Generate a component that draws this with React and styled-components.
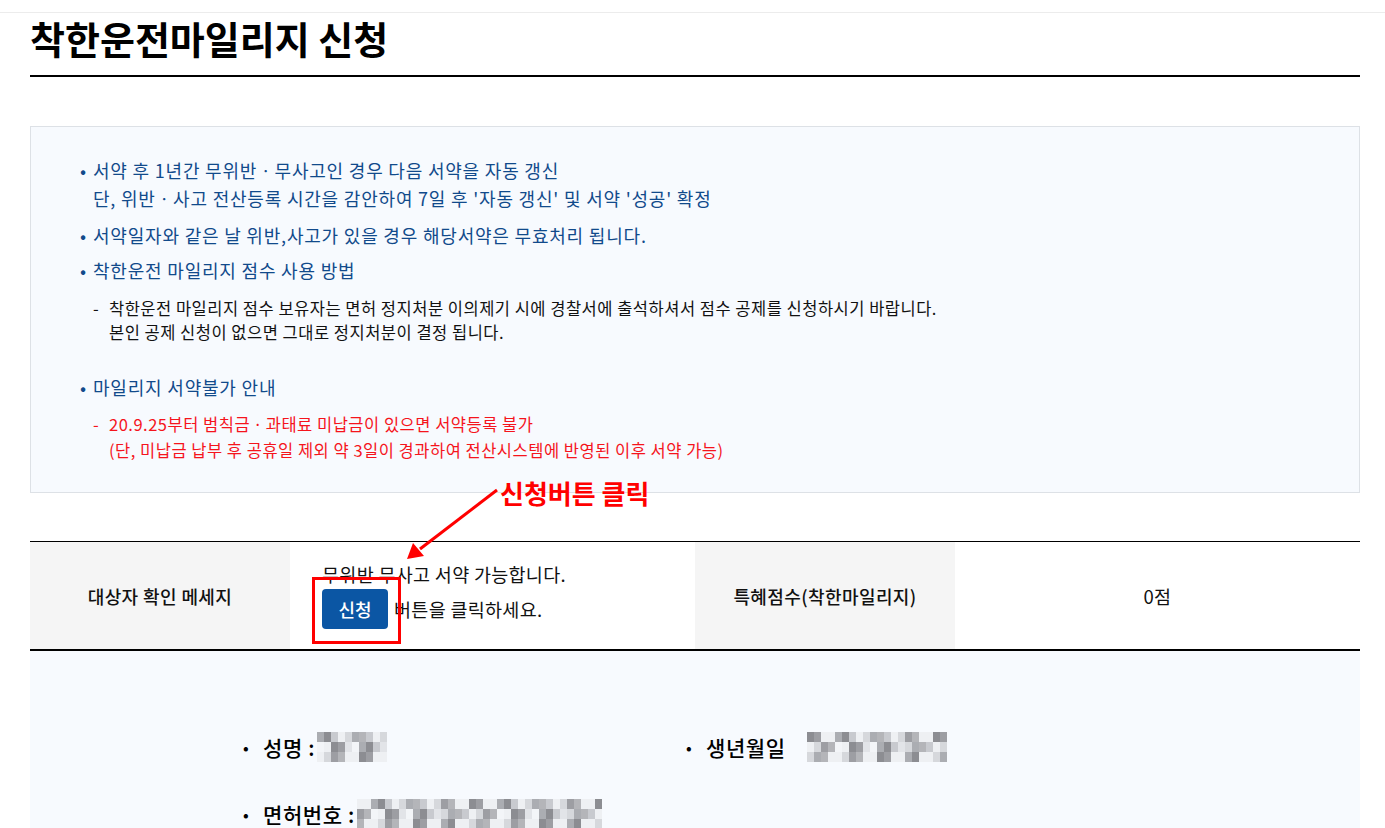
import React from "react";
import styled, { createGlobalStyle } from "styled-components";

const GlobalStyle = createGlobalStyle`
  html, body {
    margin: 0;
    padding: 0;
    background: #ffffff;
  }
  body {
    font-family: "Noto Sans CJK KR", "Noto Sans", "Liberation Sans", sans-serif;
    color: #111;
  }
`;

const Page = styled.div`
  position: relative;
  width: 1385px;
  height: 828px;
  overflow: hidden;
`;

const TopBar = styled.div`
  height: 12px;
  border-bottom: 1px solid #ececec;
`;

const Content = styled.div`
  padding: 0 25px 0 30px;
`;

const Title = styled.h1`
  margin: 0;
  font-size: 38px;
  font-weight: 700;
  line-height: 50px;
  letter-spacing: 0;
  color: #000;
  padding-bottom: 12px;
  border-bottom: 2px solid #000;
`;

const InfoBox = styled.div`
  margin-top: 49px;
  background: #f7fafe;
  border: 1px solid #dde1e6;
  padding: 29px 20px 29px 49px;
`;

const Item = styled.div`
  display: flex;
  margin-top: ${p => p.$gap || 0}px;
  font-size: 18px;
  letter-spacing: 0.8px;
  line-height: 28px;
  color: #114a8b;
`;

const Marker = styled.span`
  flex: 0 0 ${p => p.$w || 13}px;
  letter-spacing: 0;
`;

const SubList = styled.div`
  margin-top: ${p => p.$gap || 0}px;
  padding-left: 13px;
`;

const SubItem = styled.div`
  display: flex;
  font-size: 16.5px;
  letter-spacing: 0.5px;
  line-height: ${p => p.$lh || 24}px;
  color: ${p => (p.$red ? "#f5141c" : "#111")};
`;

const Table = styled.div`
  margin-top: 48px;
  display: grid;
  grid-template-columns: 260px 405px 260px 405px;
  border-top: 1px solid #000;
  border-bottom: 2px solid #000;
  min-height: 107px;
`;

const HeadCell = styled.div`
  background: #f5f5f5;
  display: flex;
  align-items: center;
  justify-content: center;
  font-size: 18px;
  letter-spacing: 0.4px;
  font-weight: 500;
  color: #111;
`;

const DataCell = styled.div`
  display: flex;
  flex-direction: column;
  justify-content: center;
  align-items: ${p => (p.$center ? "center" : "flex-start")};
  padding: ${p => (p.$center ? "0" : "0 0 0 32px")};
  font-size: 18.5px;
  letter-spacing: 0.3px;
  line-height: 24px;
  color: #111;
`;

const ButtonLine = styled.div`
  display: flex;
  align-items: center;
  gap: 6px;
  margin-top: 3px;
`;

const ApplyButton = styled.button`
  width: 66px;
  height: 40px;
  border: 0;
  border-radius: 4px;
  background: #0b56a4;
  color: #fff;
  font-family: inherit;
  font-size: 18px;
  font-weight: 500;
  cursor: pointer;
`;

const Panel = styled.div`
  background: #f7fafe;
  padding: 81px 0 40px 213px;
  display: grid;
  grid-template-columns: 443px 443px;
  row-gap: 37px;
`;

const Field = styled.div`
  display: flex;
  align-items: center;
  font-size: 21px;
  letter-spacing: 0.6px;
  font-weight: 500;
  line-height: 30px;
  color: #000;
`;

const Dot = styled.span`
  width: 20px;
  font-size: 16px;
`;

const Mosaic = styled.span`
  display: inline-grid;
  grid-template-columns: repeat(${p => p.$cols}, 7px);
  grid-auto-rows: 10px;
  margin-left: ${p => p.$ml || 4}px;
`;

const Pixel = styled.span`
  background: ${p => p.$c};
`;

const Overlay = styled.svg`
  position: absolute;
  left: 0;
  top: 0;
  pointer-events: none;
`;

const Callout = styled.div`
  position: absolute;
  left: 500px;
  top: 477px;
  font-size: 26px;
  font-weight: 700;
  color: #ff0000;
  line-height: 32px;
`;

const Highlight = styled.div`
  position: absolute;
  left: 312px;
  top: 577px;
  width: 83px;
  height: 61px;
  border: 3px solid #ff0000;
  pointer-events: none;
`;

const shades = ["#f3f5f8", "#e2e4e8", "#c8cacf", "#b4b5b9", "#9d9ea3", "#8c8d92", "#abadb2", "#d6d8dc", "#eef0f3"];

function blur(cols, seed) {
  const cells = [];
  for (let r = 0; r < 3; r++) {
    for (let c = 0; c < cols; c++) {
      const v = (c * 7 + r * 5 + seed * 3 + ((c * c + seed) % 4)) % shades.length;
      const edge = r === 2 ? Math.min(shades.length - 1, v + 3) : r === 0 ? Math.min(shades.length - 1, v + 2) : v;
      cells.push(shades[edge]);
    }
  }
  return cells;
}

function Blurred({ cols, seed, ml }) {
  return (
    <Mosaic $cols={cols} $ml={ml}>
      {blur(cols, seed).map((c, i) => (
        <Pixel key={i} $c={c} />
      ))}
    </Mosaic>
  );
}

export default function App() {
  return (
    <Page>
      <GlobalStyle />
      <TopBar />
      <Content>
        <Title>착한운전마일리지 신청</Title>

        <InfoBox>
          <Item>
            <Marker>•</Marker>
            <div>
              서약 후 1년간 무위반ㆍ무사고인 경우 다음 서약을 자동 갱신
              <br />
              단, 위반ㆍ사고 전산등록 시간을 감안하여 7일 후 '자동 갱신' 및 서약 '성공' 확정
            </div>
          </Item>
          <Item $gap={9}>
            <Marker>•</Marker>
            <div>서약일자와 같은 날 위반,사고가 있을 경우 해당서약은 무효처리 됩니다.</div>
          </Item>
          <Item $gap={7}>
            <Marker>•</Marker>
            <div>착한운전 마일리지 점수 사용 방법</div>
          </Item>
          <SubList $gap={12}>
            <SubItem>
              <Marker $w={16}>-</Marker>
              <div>
                착한운전 마일리지 점수 보유자는 면허 정지처분 이의제기 시에 경찰서에 출석하셔서 점수 공제를 신청하시기 바랍니다.
                <br />
                본인 공제 신청이 없으면 그대로 정지처분이 결정 됩니다.
              </div>
            </SubItem>
          </SubList>
          <Item $gap={29}>
            <Marker>•</Marker>
            <div>마일리지 서약불가 안내</div>
          </Item>
          <SubList $gap={10}>
            <SubItem $red $lh={26}>
              <Marker $w={16}>-</Marker>
              <div>
                20.9.25부터 범칙금ㆍ과태료 미납금이 있으면 서약등록 불가
                <br />
                (단, 미납금 납부 후 공휴일 제외 약 3일이 경과하여 전산시스템에 반영된 이후 서약 가능)
              </div>
            </SubItem>
          </SubList>
        </InfoBox>

        <Table>
          <HeadCell>대상자 확인 메세지</HeadCell>
          <DataCell>
            <div>무위반 무사고 서약 가능합니다.</div>
            <ButtonLine>
              <ApplyButton type="button">신청</ApplyButton>
              <span>버튼을 클릭하세요.</span>
            </ButtonLine>
          </DataCell>
          <HeadCell>특혜점수(착한마일리지)</HeadCell>
          <DataCell $center>0점</DataCell>
        </Table>

        <Panel>
          <Field>
            <Dot>•</Dot>
            성명 :
            <Blurred cols={10} seed={1} ml={2} />
          </Field>
          <Field>
            <Dot>•</Dot>
            생년월일
            <Blurred cols={20} seed={4} ml={21} />
          </Field>
          <Field>
            <Dot>•</Dot>
            면허번호 :
            <Blurred cols={35} seed={2} ml={2} />
          </Field>
        </Panel>
      </Content>

      <Callout>신청버튼 클릭</Callout>
      <Overlay width="1385" height="828" viewBox="0 0 1385 828">
        <line x1="497" y1="490" x2="420" y2="549" stroke="#ff0000" strokeWidth="3" />
        <polygon points="407,559 413,543 424,556" fill="#ff0000" />
      </Overlay>
      <Highlight />
    </Page>
  );
}
